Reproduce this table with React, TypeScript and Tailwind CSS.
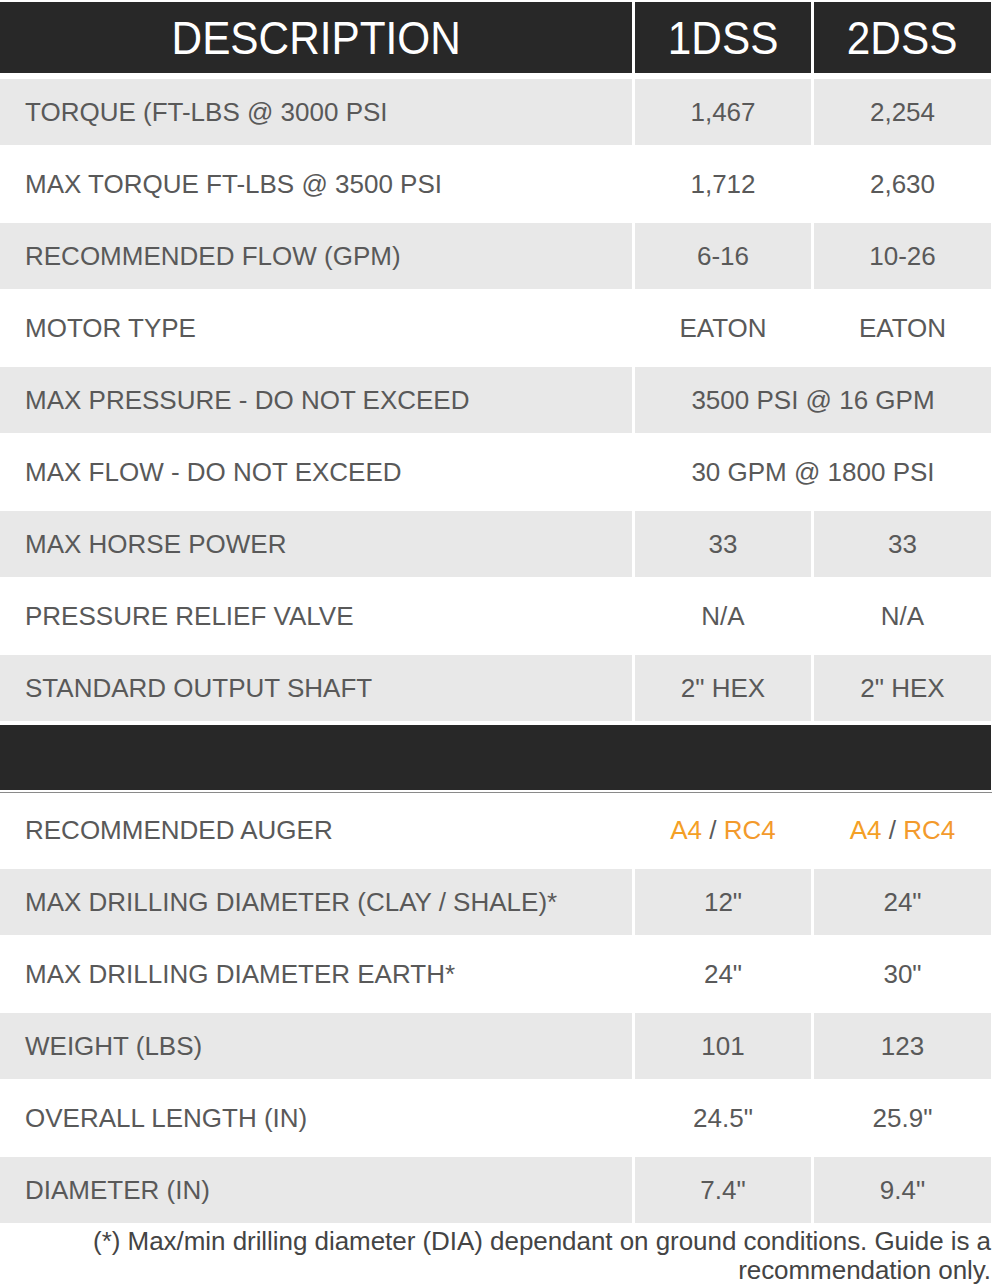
import React from "react";

type Row = { label: string; a?: React.ReactNode; b?: React.ReactNode; span?: string };

const top: Row[] = [
  { label: "TORQUE (FT-LBS @ 3000 PSI", a: "1,467", b: "2,254" },
  { label: "MAX TORQUE FT-LBS @ 3500 PSI", a: "1,712", b: "2,630" },
  { label: "RECOMMENDED FLOW (GPM)", a: "6-16", b: "10-26" },
  { label: "MOTOR TYPE", a: "EATON", b: "EATON" },
  { label: "MAX PRESSURE - DO NOT EXCEED", span: "3500 PSI @ 16 GPM" },
  { label: "MAX FLOW - DO NOT EXCEED", span: "30 GPM @ 1800 PSI" },
  { label: "MAX HORSE POWER", a: "33", b: "33" },
  { label: "PRESSURE RELIEF VALVE", a: "N/A", b: "N/A" },
  { label: "STANDARD OUTPUT SHAFT", a: "2\" HEX", b: "2\" HEX" },
];

const auger = (
  <span>
    <span className="text-[#f4a025]">A4</span> / <span className="text-[#f39a2c]">RC4</span>
  </span>
);

const bottom: Row[] = [
  { label: "RECOMMENDED AUGER", a: auger, b: auger },
  { label: "MAX DRILLING DIAMETER (CLAY / SHALE)*", a: "12\"", b: "24\"" },
  { label: "MAX DRILLING DIAMETER EARTH*", a: "24\"", b: "30\"" },
  { label: "WEIGHT (LBS)", a: "101", b: "123" },
  { label: "OVERALL LENGTH (IN)", a: "24.5\"", b: "25.9\"" },
  { label: "DIAMETER (IN)", a: "7.4\"", b: "9.4\"" },
];

function TableRow({ row, gray }: { row: Row; gray: boolean }) {
  const bg = gray ? "bg-[#e8e8e8]" : "bg-white";
  const cell = `${bg} h-[66px] flex items-center`;
  return (
    <div className="grid grid-cols-[632px_176px_177px] gap-x-[3px] w-[991px]">
      <div className={`${cell} pl-[25px]`}>{row.label}</div>
      {row.span ? (
        <div className={`${cell} col-span-2 justify-center`}>{row.span}</div>
      ) : (
        <>
          <div className={`${cell} justify-center`}>{row.a}</div>
          <div className={`${cell} justify-center`}>{row.b}</div>
        </>
      )}
    </div>
  );
}

export default function App() {
  return (
    <div
      className="w-[1000px] h-[1287px] bg-white text-[#595959] text-[26px] leading-none overflow-hidden"
      style={{ fontFamily: '"Liberation Sans", Arial, sans-serif' }}
    >
      <div className="pt-[2px]">
        <div className="grid grid-cols-[632px_176px_177px] gap-x-[3px] w-[991px] text-white text-[46px]">
          <div className="bg-[#282828] h-[71px] flex items-center justify-center">
            <span className="inline-block scale-x-[0.92]">DESCRIPTION</span>
          </div>
          <div className="bg-[#282828] h-[71px] flex items-center justify-center">
            <span className="inline-block scale-x-[0.92]">1DSS</span>
          </div>
          <div className="bg-[#282828] h-[71px] flex items-center justify-center">
            <span className="inline-block scale-x-[0.92]">2DSS</span>
          </div>
        </div>
        <div className="flex flex-col gap-y-[6px] mt-[6px]">
          {top.map((r, i) => (
            <TableRow key={r.label} row={r} gray={i % 2 === 0} />
          ))}
        </div>
        <div className="mt-[4px] w-[991px] h-[65px] bg-[#282828]" />
        <div className="mt-[2px] w-[992px] h-[1px] bg-[#8a8a8a]" />
        <div className="flex flex-col gap-y-[6px] mt-[4px]">
          {bottom.map((r, i) => (
            <TableRow key={r.label} row={r} gray={i % 2 === 1} />
          ))}
        </div>
        <div className="w-[991px] text-right text-[26px] leading-[29px] text-[#444444] mt-[4px] tracking-[-0.05px]">
          (*) Max/min drilling diameter (DIA) dependant on ground conditions. Guide is a recommendation only.
        </div>
      </div>
    </div>
  );
}
